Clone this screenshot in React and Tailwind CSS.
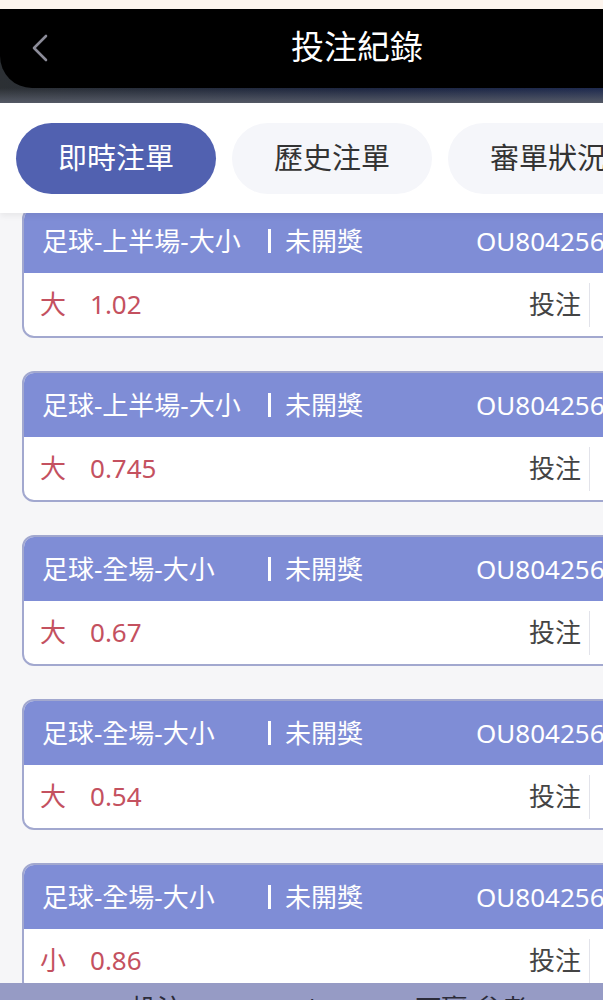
import React from "react";

const font = { fontFamily: '"Noto Sans", "Noto Sans CJK TC", sans-serif' };

const bets = [
  { type: "足球-上半場-大小", side: "大", odds: "1.02" },
  { type: "足球-上半場-大小", side: "大", odds: "0.745" },
  { type: "足球-全場-大小", side: "大", odds: "0.67" },
  { type: "足球-全場-大小", side: "大", odds: "0.54" },
  { type: "足球-全場-大小", side: "小", odds: "0.86" },
];

function BetCard({ bet }) {
  return (
    <div className="rounded-[12px] border-2 border-[#a2a8cf] overflow-hidden bg-white">
      <div className="h-[64px] bg-[#7f8dd6] flex items-center pl-[18px] text-white text-[26px]">
        <span className="w-[226px] whitespace-nowrap">{bet.type}</span>
        <span className="w-[208px] whitespace-nowrap flex items-center">
          <span className="inline-block w-[3px] h-[24px] bg-white mr-[14px]" />
          未開獎
        </span>
        <span className="whitespace-nowrap">OU804256</span>
      </div>
      <div className="h-[63px] flex items-center text-[26px]">
        <div className="flex-1 pl-[16px] text-[#c4515f] whitespace-nowrap">
          {bet.side}
          <span className="ml-[24px]">{bet.odds}</span>
        </div>
        <div className="h-[44px] flex items-center pr-[8px] border-r border-[#e2e3ea] text-[#444]">
          投注
        </div>
        <div className="w-[100px]" />
      </div>
    </div>
  );
}

export default function App() {
  return (
    <div className="w-[603px] h-[1000px] overflow-hidden relative bg-[#f6f6f8]" style={font}>
      <div className="w-[714px]">
        <div className="h-[9px] bg-[#fdf5ee]" />
        {/* Header */}
        <div className="bg-gradient-to-r from-[#2c3034] via-[#1c2540] to-[#1e2b55]">
          <div className="h-[79px] bg-black rounded-bl-[32px] flex items-center relative">
            <svg
              className="absolute left-[31px] top-[24px]"
              width="18"
              height="30"
              viewBox="0 0 18 30"
              fill="none"
              stroke="#8b8b98"
              strokeWidth="2.6"
              strokeLinecap="round"
              strokeLinejoin="round"
            >
              <path d="M15 3 L3 15 L15 27" />
            </svg>
            <div className="flex-1 text-center text-white text-[33px] leading-none -mt-[4px]">
              投注紀錄
            </div>
          </div>
          <div className="h-[15px] bg-gradient-to-b from-transparent to-[#555a66]" />
        </div>
        {/* Tabs */}
        <div className="relative z-10 bg-white h-[110px] flex items-center gap-[16px] px-[16px] shadow-[0_3px_6px_rgba(0,0,0,0.06)]">
          <div className="w-[200px] h-[71px] rounded-full bg-[#5161b0] text-white text-[29px] flex items-center justify-center">
            即時注單
          </div>
          <div className="w-[200px] h-[71px] rounded-full bg-[#f5f6fa] text-[#333] text-[29px] flex items-center justify-center">
            歷史注單
          </div>
          <div className="w-[200px] h-[71px] rounded-full bg-[#f5f6fa] text-[#333] text-[29px] flex items-center justify-center">
            審單狀況
          </div>
        </div>
        {/* List */}
        <div className="-mt-[6px] px-[22px] flex flex-col gap-[33px]">
          {bets.map((b, i) => (
            <BetCard key={i} bet={b} />
          ))}
        </div>
      </div>
      {/* Bottom bar */}
      <div className="absolute left-0 top-[983px] w-[714px] h-[60px] bg-[#969bc5] flex text-[26px] text-[#2c2c3a] pt-[6px] whitespace-nowrap">
        <span className="ml-[131px]">投注</span>
        <span className="ml-[122px]">|</span>
        <span className="ml-[96px]">可贏(参考)</span>
      </div>
    </div>
  );
}
